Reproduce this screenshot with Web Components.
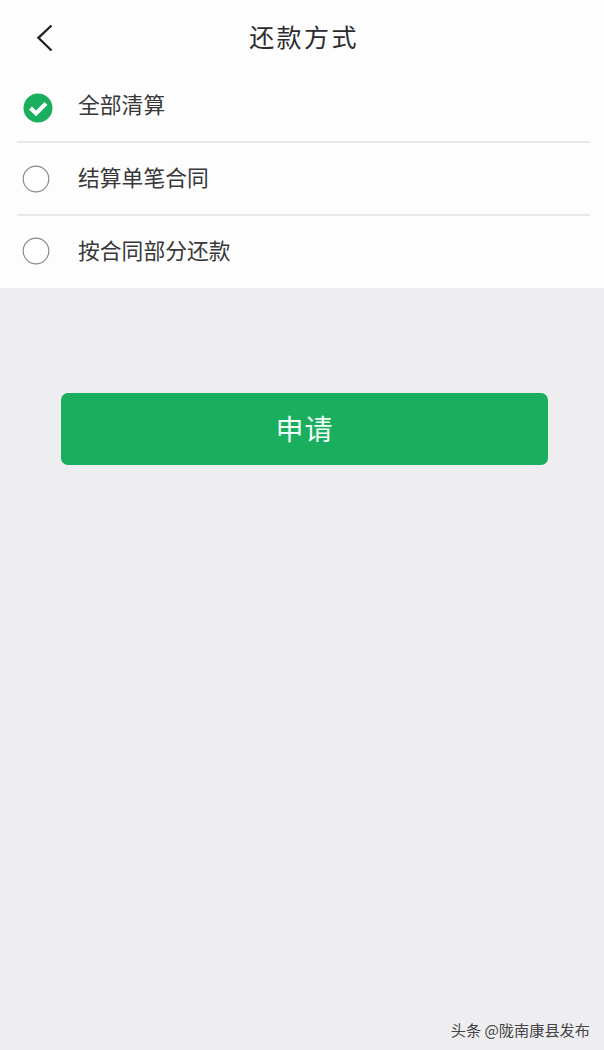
<!DOCTYPE html>
<html lang="zh-CN">
<head>
<meta charset="utf-8">
<title>还款方式</title>
<style>
    html, body { margin: 0; height: 100%; }
    body {
        background: #eeedef;
        font-family: "Noto Sans CJK SC", "Noto Sans", sans-serif;
    }
</style>
</head>
<body>
<repay-page>
    <nav-bar slot="top">还款方式</nav-bar>
    <radio-row slot="top" checked>全部清算</radio-row>
    <radio-row slot="top">结算单笔合同</radio-row>
    <radio-row slot="top" last>按合同部分还款</radio-row>
    <apply-button>申请</apply-button>
    <span slot="foot">头条 @陇南康县发布</span>
</repay-page>

<script>
class RepayPage extends HTMLElement {
    constructor() {
        super();
        this.attachShadow({ mode: 'open' });
    }

    connectedCallback() {
        this.shadowRoot.innerHTML = `
            <style>
                :host {
                    display: flex;
                    flex-direction: column;
                    height: 1050px;
                    box-sizing: border-box;
                    overflow: hidden;
                }
                .top {
                    background: #fdfdfd;
                    display: block;
                }
                .main {
                    padding: 105px 56px 0 61px;
                }
                .foot {
                    margin-top: auto;
                    padding: 0 14px 9px 0;
                    text-align: right;
                    font-size: 15.2px;
                    line-height: 24px;
                    color: #444446;
                }
            </style>
            <div class="top"><slot name="top"></slot></div>
            <div class="main"><slot></slot></div>
            <div class="foot"><slot name="foot"></slot></div>
        `;
    }
}

class NavBar extends HTMLElement {
    constructor() {
        super();
        this.attachShadow({ mode: 'open' });
    }

    connectedCallback() {
        this.shadowRoot.innerHTML = `
            <style>
                :host {
                    display: flex;
                    align-items: center;
                    justify-content: center;
                    position: relative;
                    height: 70px;
                    padding-bottom: 1px;
                    box-sizing: border-box;
                    font-size: 25px;
                    letter-spacing: 2.4px;
                    color: #2b2b2d;
                }
                svg {
                    position: absolute;
                    left: 36px;
                    top: 24px;
                }
                .title { margin-left: 4px; margin-top: 2px; }
            </style>
            <svg width="18" height="28" viewBox="0 0 18 28" fill="none">
                <path d="M15.5 1.5 L2.4 13.8 L15.5 26.5" stroke="#222" stroke-width="2.3"/>
            </svg>
            <span class="title"><slot></slot></span>
        `;
    }
}

class RadioRow extends HTMLElement {
    constructor() {
        super();
        this.attachShadow({ mode: 'open' });
    }

    connectedCallback() {
        const mark = this.hasAttribute('checked')
            ? `<svg class="mark on" width="30" height="30" viewBox="0 0 30 30">
                   <circle cx="15" cy="15" r="14.5" fill="#1aae5f"/>
                   <path d="M7.5 15 L13 20.5 L23 10.5" fill="none" stroke="#fff" stroke-width="4"/>
               </svg>`
            : `<svg class="mark" width="30" height="30" viewBox="0 0 30 30">
                   <circle cx="15" cy="15" r="12.8" fill="#fff" stroke="#8b8b8b" stroke-width="1.2"/>
               </svg>`;
        this.shadowRoot.innerHTML = `
            <style>
                :host {
                    display: block;
                    padding: 0 14px 0 17px;
                }
                .row {
                    display: flex;
                    align-items: center;
                    box-sizing: border-box;
                    height: 73px;
                    border-bottom: 2px solid #e8e8ea;
                    font-size: 21.8px;
                    color: #38383a;
                }
                :host([last]) .row {
                    height: 72px;
                    border-bottom-color: transparent;
                }
                .mark { margin: 0 27px 0 4px; flex: none; }
                .mark.on { margin: 5px 25px 0 6px; }
                .text { margin-top: -5px; }
                :host([last]) .text { margin-top: -3px; }
            </style>
            <div class="row">
                ${mark}
                <span class="text"><slot></slot></span>
            </div>
        `;
    }
}

class ApplyButton extends HTMLElement {
    constructor() {
        super();
        this.attachShadow({ mode: 'open' });
    }

    connectedCallback() {
        this.shadowRoot.innerHTML = `
            <style>
                :host {
                    display: flex;
                    align-items: center;
                    justify-content: center;
                    height: 72px;
                    padding-bottom: 2px;
                    box-sizing: border-box;
                    border-radius: 7px;
                    background: #1aae5f;
                    color: #f2fff8;
                    font-size: 28px;
                    letter-spacing: 1px;
                }
            </style>
            <slot></slot>
        `;
    }
}

customElements.define('repay-page', RepayPage);
customElements.define('nav-bar', NavBar);
customElements.define('radio-row', RadioRow);
customElements.define('apply-button', ApplyButton);
</script>
</body>
</html>
